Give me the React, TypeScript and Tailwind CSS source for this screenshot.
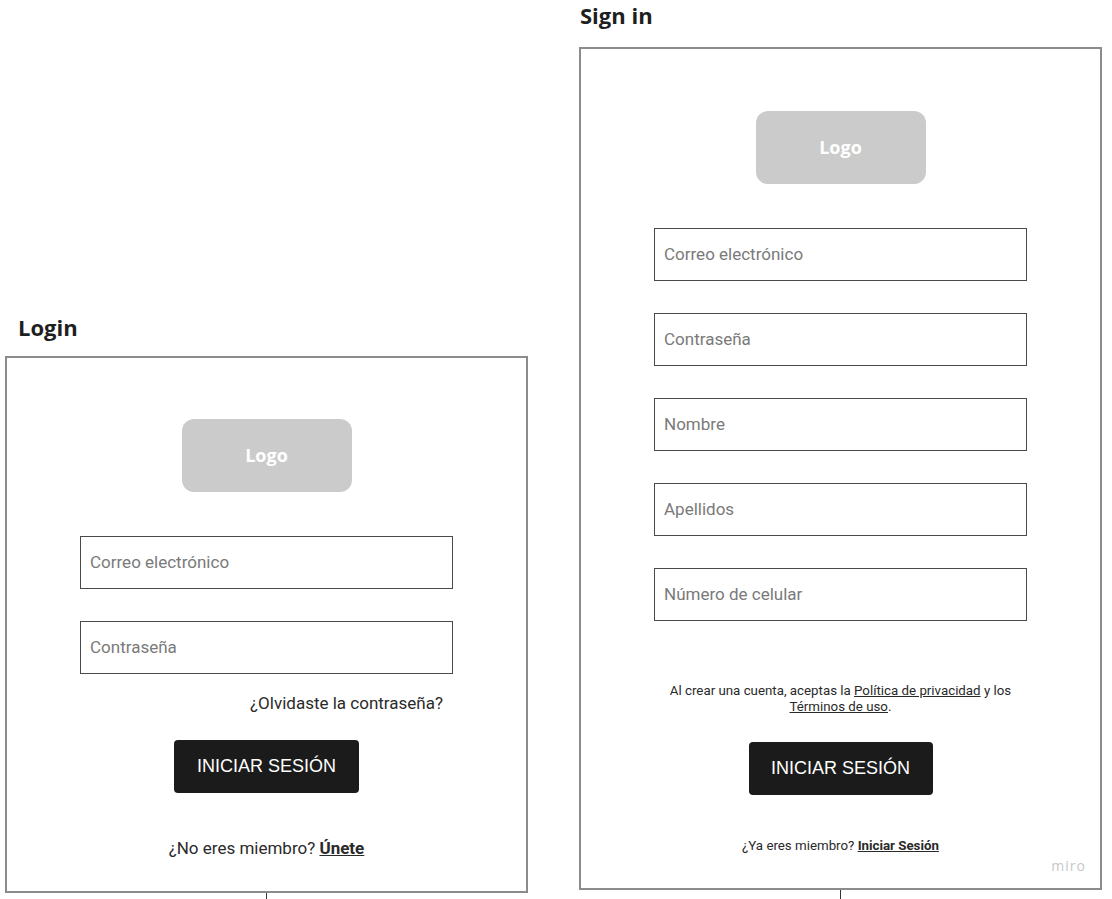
import React from "react";

const roboto = { fontFamily: "Roboto, 'Liberation Sans', sans-serif" };

function Logo() {
  return (
    <div className="w-[170px] h-[73px] rounded-[12px] bg-[#cbcbcb] flex items-center justify-center">
      <span className="text-white font-bold text-[18px] font-['Open_Sans',sans-serif]">Logo</span>
    </div>
  );
}

function Field({ label }: { label: string }) {
  return (
    <div className="w-[373px] h-[53px] border border-[#4a4a4a] flex items-center pl-[9px] bg-white">
      <span className="text-[17px] text-[#7a7a7a] font-['Roboto',sans-serif]">{label}</span>
    </div>
  );
}

function Button({ w }: { w: number }) {
  return (
    <button
      className={`${w === 185 ? "w-[185px]" : "w-[184px]"} h-[53px] rounded-[4px] bg-[#1b1b1b] text-white text-[18px] font-['Liberation_Sans',Arial,sans-serif] flex items-center justify-center`}
    >
      INICIAR SESIÓN
    </button>
  );
}

export default function App() {
  return (
    <div className="relative w-[1112px] h-[899px] bg-white overflow-hidden">
      {/* Login frame */}
      <div className="absolute left-[5px] top-[313px] flex flex-col">
        <div className="pl-[13px] h-[43px] text-[22px] font-bold text-[#1f1f1f] leading-[28px] font-['Open_Sans',sans-serif]">
          Login
        </div>
        <div className="w-[523px] h-[537px] border-2 border-[#8c8c8c] flex flex-col items-center">
          <div className="mt-[61px]">
            <Logo />
          </div>
          <div className="mt-[44px] flex flex-col gap-[32px]">
            <Field label="Correo electrónico" />
            <Field label="Contraseña" />
          </div>
          <div className="w-[373px] mt-[19px] flex justify-end pr-[10px]">
            <span className="text-[17px] leading-[20px] text-[#2a2a2a]" style={roboto}>
              ¿Olvidaste la contraseña?
            </span>
          </div>
          <div className="mt-[27px]">
            <Button w={185} />
          </div>
          <div className="mt-[45px] text-[17px] leading-[20px] text-[#2a2a2a]" style={roboto}>
            ¿No eres miembro? <span className="font-bold underline">Únete</span>
          </div>
        </div>
        <div className="ml-[261px] w-px h-[6px] bg-[#333]" />
      </div>

      {/* Sign in frame */}
      <div className="absolute left-[579px] top-[0px] flex flex-col">
        <div className="pl-[1px] h-[47px] text-[22px] font-bold text-[#1f1f1f] leading-[30px] font-['Open_Sans',sans-serif]">
          Sign in
        </div>
        <div className="relative w-[523px] h-[843px] border-2 border-[#8c8c8c] flex flex-col items-center">
          <div className="mt-[62px]">
            <Logo />
          </div>
          <div className="mt-[44px] flex flex-col gap-[32px]">
            <Field label="Correo electrónico" />
            <Field label="Contraseña" />
            <Field label="Nombre" />
            <Field label="Apellidos" />
            <Field label="Número de celular" />
          </div>
          <div className="mt-[62px] w-[420px] text-center text-[13.3px] leading-[16px] text-[#2a2a2a]" style={roboto}>
            Al crear una cuenta, aceptas la <span className="underline">Política de privacidad</span> y los
            <br />
            <span className="underline">Términos de uso</span>.
          </div>
          <div className="mt-[27px]">
            <Button w={184} />
          </div>
          <div className="mt-[43px] text-[13.3px] leading-[16px] text-[#2a2a2a]" style={roboto}>
            ¿Ya eres miembro? <span className="font-bold underline">Iniciar Sesión</span>
          </div>
          <div className="absolute right-[14px] bottom-[12px] text-[14px] tracking-[1px] text-[#c8c8c8] font-['Open_Sans',sans-serif]">
            miro
          </div>
        </div>
        <div className="ml-[261px] w-px h-[9px] bg-[#333]" />
      </div>
    </div>
  );
}
